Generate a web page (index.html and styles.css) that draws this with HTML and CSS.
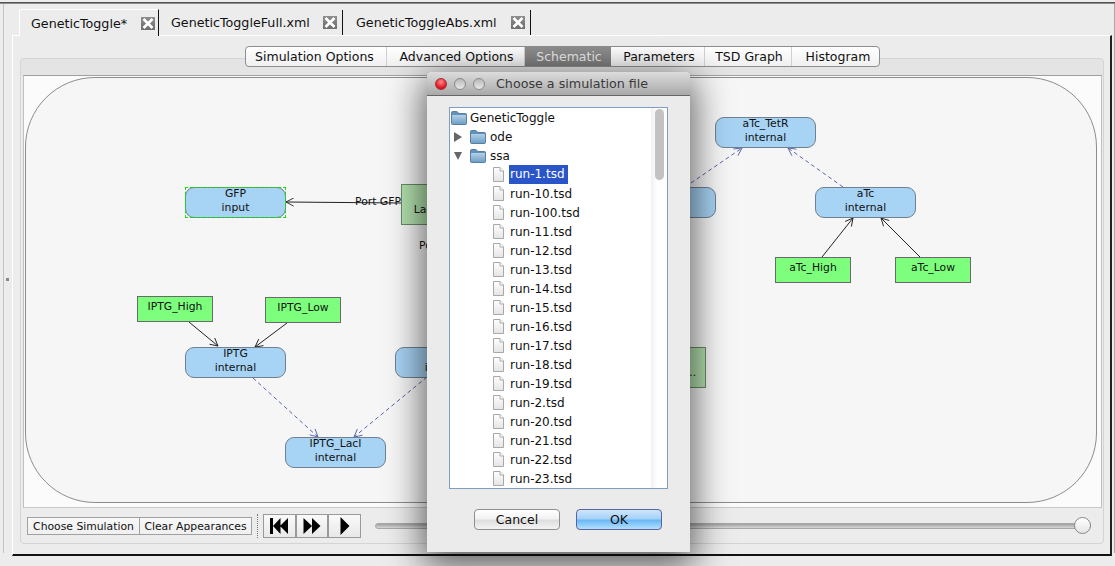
FILE: index.html
```html
<!DOCTYPE html>
<html lang="en">
<head>
    <meta charset="UTF-8">
    <meta name="viewport" content="width=device-width, initial-scale=1.0">
    <title>GeneticToggle</title>
    <link rel="stylesheet" href="styles.css">
</head>
<body>

<svg class="defs" width="0" height="0">
    <symbol id="folder" viewBox="0 0 16 14">
        <path d="M0.5 3 L0.5 1.6 Q0.5 0.5 1.6 0.5 L5.5 0.5 Q6.5 0.5 7 1.5 L7.5 2.5 L14.5 2.5 Q15.5 2.5 15.5 3.5 L15.5 12.5 Q15.5 13.5 14.5 13.5 L1.5 13.5 Q0.5 13.5 0.5 12.5 Z" fill="#5f93bd" stroke="#5a7f9e"/>
        <rect x="1" y="4" width="14" height="9" rx="0.5" fill="url(#folderFill)"/>
    </symbol>
    <symbol id="file" viewBox="0 0 11 15">
        <path d="M0.5 0.5 L7 0.5 L10.5 4 L10.5 14.5 L0.5 14.5 Z" fill="url(#fileFill)" stroke="#a8a8a8"/>
        <path d="M7 0.5 L7 4 L10.5 4" fill="#fff" stroke="#a8a8a8"/>
    </symbol>
    <linearGradient id="folderFill" x1="0" y1="0" x2="0" y2="1">
        <stop offset="0" stop-color="#b4d0e6"/>
        <stop offset="1" stop-color="#6ea0c8"/>
    </linearGradient>
    <linearGradient id="fileFill" x1="0" y1="0" x2="0" y2="1">
        <stop offset="0" stop-color="#ffffff"/>
        <stop offset="1" stop-color="#e4e4e4"/>
    </linearGradient>
    <marker id="arrowOpen" viewBox="0 0 10 10" refX="9.5" refY="5" markerWidth="9" markerHeight="9" markerUnits="userSpaceOnUse" orient="auto">
        <path d="M1 0.5 L9.5 5 L1 9.5" fill="none" stroke="#222" stroke-width="1"/>
    </marker>
    <marker id="arrowBlue" viewBox="0 0 10 10" refX="9.5" refY="5" markerWidth="9" markerHeight="9" markerUnits="userSpaceOnUse" orient="auto">
        <path d="M1 0.5 L9.5 5 L1 9.5" fill="none" stroke="#5a64ad" stroke-width="1"/>
    </marker>
</svg>

<div class="top-rule"></div>

<div class="split">
    <span class="split-handle"></span>

    <!-- File tabs -->
    <div class="tabs">
        <div class="tab tab-first">
            <span>GeneticToggle*</span>
            <span class="tab-close"><svg width="14" height="13" viewBox="0 0 14 13"><path d="M2.5 2 L11.5 11 M11.5 2 L2.5 11" stroke="#fff" stroke-width="2.6"/></svg></span>
        </div>
        <div class="tab tab-second">
            <span>GeneticToggleFull.xml</span>
            <span class="tab-close"><svg width="14" height="13" viewBox="0 0 14 13"><path d="M2.5 2 L11.5 11 M11.5 2 L2.5 11" stroke="#fff" stroke-width="2.6"/></svg></span>
        </div>
        <div class="tab tab-third">
            <span>GeneticToggleAbs.xml</span>
            <span class="tab-close"><svg width="14" height="13" viewBox="0 0 14 13"><path d="M2.5 2 L11.5 11 M11.5 2 L2.5 11" stroke="#fff" stroke-width="2.6"/></svg></span>
        </div>
    </div>

    <div class="tab-pane">
        <div class="segments">
            <button class="segment seg-sim">Simulation Options</button>
            <button class="segment seg-adv">Advanced Options</button>
            <button class="segment seg-sch active">Schematic</button>
            <button class="segment seg-par">Parameters</button>
            <button class="segment seg-tsd">TSD Graph</button>
            <button class="segment seg-his">Histogram</button>
        </div>

        <div class="panel">
            <!-- Schematic canvas, svg uses page coordinates -->
            <div class="canvas">
                <div class="compartment"></div>

                <svg class="edges" width="1079" height="433" viewBox="23 75 1079 433">
                    <g class="edge-solid">
                        <path d="M401 203 L286 202" marker-end="url(#arrowOpen)"/>
                        <path d="M189 322 L218 346" marker-end="url(#arrowOpen)"/>
                        <path d="M287 323 L255 347" marker-end="url(#arrowOpen)"/>
                        <path d="M822 257 L853 218" marker-end="url(#arrowOpen)"/>
                        <path d="M920 257 L881 218" marker-end="url(#arrowOpen)"/>
                    </g>
                    <g class="edge-dashed">
                        <path d="M253 378 L318 437" marker-end="url(#arrowBlue)"/>
                        <path d="M427 377 L354 437" marker-end="url(#arrowBlue)"/>
                        <path d="M691 183 L742 148" marker-end="url(#arrowBlue)"/>
                        <path d="M843 187 L788 148" marker-end="url(#arrowBlue)"/>
                    </g>
                </svg>

                <div class="node n-gfp">GFP<br>input</div>
                <div class="node n-iptg">IPTG<br>internal</div>
                <div class="node n-iptg-laci">IPTG_LacI<br>internal</div>
                <div class="node n-mid">IPTG<br>internal</div>
                <div class="node n-tetr">aTc_TetR<br>internal</div>
                <div class="node n-atc">aTc<br>internal</div>
                <div class="node n-hidden">TetR<br>internal</div>

                <div class="source n-iptg-high">IPTG_High</div>
                <div class="source n-iptg-low">IPTG_Low</div>
                <div class="source n-atc-high">aTc_High</div>
                <div class="source n-atc-low">aTc_Low</div>

                <div class="gate n-laci">LacI_TetR</div>
                <div class="gate n-gate2">...</div>

                <span class="port n-port-gfp">Port GFP</span>
                <span class="port n-port-2">Port</span>
            </div>

            <div class="toolbar">
                <div class="plain-buttons">
                    <button class="plain-button">Choose Simulation</button>
                    <button class="plain-button">Clear Appearances</button>
                </div>
                <span class="grip"></span>
                <div class="transport">
                    <button class="transport-button"><svg width="20" height="16" viewBox="0 0 20 16"><path d="M1 0 H4 V16 H1 Z M4 8 L11.5 0 V16 Z M11 8 L19 0 V16 Z"/></svg></button>
                    <button class="transport-button"><svg width="18" height="16" viewBox="0 0 18 16"><path d="M0.5 0 L9 8 L0.5 16 Z M9 0 L17.5 8 L9 16 Z"/></svg></button>
                    <button class="transport-button"><svg width="10" height="18" viewBox="0 0 10 18"><path d="M0.5 0 L9.5 9 L0.5 18 Z"/></svg></button>
                </div>
                <div class="slider"><span class="slider-knob"></span></div>
            </div>
        </div>
    </div>
</div>

<!-- File chooser dialog -->
<div class="dialog">
    <div class="title-bar">
        <span class="light light-close"></span>
        <span class="light"></span>
        <span class="light"></span>
        <span class="title-text">Choose a simulation file</span>
    </div>
    <div class="dialog-body">
        <div class="tree">
            <div class="row row-root"><svg class="folder-icon"><use href="#folder"/></svg>GeneticToggle</div>
            <div class="row row-dir"><span class="twisty twisty-right"></span><svg class="folder-icon"><use href="#folder"/></svg>ode</div>
            <div class="row row-dir"><span class="twisty twisty-down"></span><svg class="folder-icon"><use href="#folder"/></svg>ssa</div>
            <div class="row row-file"><svg class="file-icon"><use href="#file"/></svg><span class="selected">run-1.tsd</span></div>
            <div class="row row-file"><svg class="file-icon"><use href="#file"/></svg>run-10.tsd</div>
            <div class="row row-file"><svg class="file-icon"><use href="#file"/></svg>run-100.tsd</div>
            <div class="row row-file"><svg class="file-icon"><use href="#file"/></svg>run-11.tsd</div>
            <div class="row row-file"><svg class="file-icon"><use href="#file"/></svg>run-12.tsd</div>
            <div class="row row-file"><svg class="file-icon"><use href="#file"/></svg>run-13.tsd</div>
            <div class="row row-file"><svg class="file-icon"><use href="#file"/></svg>run-14.tsd</div>
            <div class="row row-file"><svg class="file-icon"><use href="#file"/></svg>run-15.tsd</div>
            <div class="row row-file"><svg class="file-icon"><use href="#file"/></svg>run-16.tsd</div>
            <div class="row row-file"><svg class="file-icon"><use href="#file"/></svg>run-17.tsd</div>
            <div class="row row-file"><svg class="file-icon"><use href="#file"/></svg>run-18.tsd</div>
            <div class="row row-file"><svg class="file-icon"><use href="#file"/></svg>run-19.tsd</div>
            <div class="row row-file"><svg class="file-icon"><use href="#file"/></svg>run-2.tsd</div>
            <div class="row row-file"><svg class="file-icon"><use href="#file"/></svg>run-20.tsd</div>
            <div class="row row-file"><svg class="file-icon"><use href="#file"/></svg>run-21.tsd</div>
            <div class="row row-file"><svg class="file-icon"><use href="#file"/></svg>run-22.tsd</div>
            <div class="row row-file"><svg class="file-icon"><use href="#file"/></svg>run-23.tsd</div>
            <div class="scroll-track"><span class="scroll-thumb"></span></div>
        </div>
        <div class="dialog-buttons">
            <button class="aqua-button">Cancel</button>
            <button class="aqua-button aqua-default">OK</button>
        </div>
    </div>
</div>

</body>
</html>
```

FILE: styles.css
```css
html, body {
    margin: 0;
    padding: 0;
    height: 566px;
    overflow: hidden;
}

body {
    position: relative;
    background-color: #ececec;
    color: #111;
    font-family: "DejaVu Sans", sans-serif;
    font-size: 12px;
}

button {
    font-family: inherit;
    color: inherit;
    margin: 0;
}

.defs {
    position: absolute;
}

.top-rule {
    margin-top: 2px;
    height: 1px;
    border-bottom: 1px solid #8c8c8c;
    background-color: #555;
}

/* Left splitter area */
.split {
    position: relative;
    box-sizing: border-box;
    height: 549px;
    margin-left: 3px;
    padding: 6px 2px 0 8px;
    border-left: 1px solid #c4c4c4;
    border-right: 1px solid #a8a8a8;
    display: flex;
    flex-direction: column;
}

.split-handle {
    position: absolute;
    left: 2px;
    top: 274px;
    width: 3px;
    height: 3px;
    background-color: #888;
}

/* Tabs */
.tabs {
    flex: none;
    display: flex;
    height: 25px;
    padding-left: 7px;
    position: relative;
    z-index: 1;
}

.tab {
    display: flex;
    align-items: center;
    justify-content: space-between;
    box-sizing: border-box;
    font-size: 12.7px;
    border-right: 1px solid #111;
    margin-right: 1px;
}

.tab-first {
    width: 140px;
    height: 27px;
    margin-top: -1px;
    padding: 0 3px 0 11px;
    background-color: #ececec;
    border-left: 1px solid #fff;
    border-top: 1px solid #fff;
    border-top-left-radius: 3px;
}

.tab-second {
    width: 183px;
    padding: 0 5px 0 11px;
}

.tab-third {
    width: 187px;
    padding: 0 5px 0 12px;
}

.tab-close {
    flex: none;
    width: 14px;
    height: 13px;
    background: linear-gradient(#8e8e8e, #6e6e6e);
    display: flex;
    align-items: center;
    justify-content: center;
}

.tab-close svg {
    flex: none;
}

.tab-pane {
    flex: none;
    box-sizing: border-box;
    height: 521px;
    padding: 10px 6px 0 7px;
    border-top: 1px solid #fff;
    border-left: 1px solid #fff;
    border-right: 2px solid #222;
    border-bottom: 2px solid #111;
}

/* Segmented control */
.segments {
    position: relative;
    z-index: 1;
    display: flex;
    width: 635px;
    height: 21px;
    box-sizing: border-box;
    margin: 0 0 -9px 225px;
    border: 1px solid #8e8e8e;
    border-radius: 4px;
    background: linear-gradient(#fff, #f0f0f0);
    overflow: hidden;
}

.segment {
    border: 0;
    border-right: 1px solid #d0d0d0;
    background: none;
    padding: 0;
    font-size: 12.5px;
    text-align: center;
}

.seg-sim { width: 141px; padding-right: 3px; }
.seg-adv { width: 138px; padding-left: 2px; }
.seg-sch { width: 86px; padding-left: 2px; }
.seg-par { width: 94px; padding-left: 3px; }
.seg-tsd { width: 87px; padding-left: 2px; }
.seg-his { flex: 1; border-right: 0; padding-left: 5px; }

.segment.active {
    background: linear-gradient(#8e8e8e, #7c7c7c);
    color: #e8e8e8;
    border-right: 0;
}

/* Panel with canvas and toolbar */
.panel {
    box-sizing: border-box;
    height: 486px;
    padding: 16px 1px 0 2px;
    background: linear-gradient(#e4e4e4 17px, #ececec 17px);
    border: 1px solid #d4d4d4;
    border-radius: 4px;
}

.canvas {
    position: relative;
    box-sizing: border-box;
    width: 1079px;
    height: 433px;
    background-color: #fbfbfb;
    border-top: 1px solid #a0a0a0;
    border-bottom: 1px solid #c8c8c8;
    border-right: 1px solid #c0c0c0;
    border-left: 1px solid #c0c0c0;
    overflow: hidden;
}

.compartment {
    position: absolute;
    left: 1px;
    top: 1px;
    width: 1072px;
    height: 426px;
    box-sizing: border-box;
    background-color: #f6f6f6;
    border: 1px solid #8c8c8c;
    border-radius: 70px;
}

.edges {
    position: absolute;
    left: -1px;
    top: -1px;
}

.edge-solid path {
    fill: none;
    stroke: #222;
    stroke-width: 1;
}

.edge-dashed path {
    fill: none;
    stroke: #5a64ad;
    stroke-width: 1;
    stroke-dasharray: 4 3;
}

/* Nodes are placed at their diagram coordinates */
.node, .source, .gate {
    position: absolute;
    box-sizing: border-box;
    font-size: 10.8px;
    line-height: 14px;
    text-align: center;
    color: #111;
}

.node {
    width: 101px;
    height: 31px;
    background-color: #a7d3f4;
    border: 1px solid #71808e;
    border-radius: 9px;
}

.node::before {
    content: "";
    display: block;
    margin-top: -1px;
}

.source {
    width: 76px;
    height: 26px;
    padding-top: 3px;
    background-color: #7dff7d;
    border: 1px solid #6a6a6a;
}

.gate {
    width: 76px;
    height: 41px;
    padding-top: 18px;
    background-color: #b4e2ae;
    border: 1px solid #6a8a6a;
}

.port {
    position: absolute;
    font-size: 10.8px;
    line-height: 14px;
}

.n-gfp::after {
    content: "";
    position: absolute;
    inset: -1px;
    border: 1px dashed #10e010;
}

.n-iptg { left: 161px; top: 271px; }
.n-gfp { left: 161px; top: 111px; }
.n-iptg-laci { left: 261px; top: 361px; }
.n-mid { left: 371px; top: 271px; }
.n-tetr { left: 691px; top: 41px; }
.n-atc { left: 791px; top: 111px; }
.n-hidden { left: 591px; top: 111px; }
.n-iptg-high { left: 113px; top: 220px; }
.n-iptg-low { left: 241px; top: 221px; }
.n-atc-high { left: 751px; top: 181px; }
.n-atc-low { left: 871px; top: 181px; }
.n-laci { left: 377px; top: 108px; }
.n-gate2 { left: 606px; top: 271px; padding-left: 46px; }
.n-port-gfp { left: 331px; top: 119px; }
.n-port-2 { left: 395px; top: 163px; }

/* Bottom toolbar */
.toolbar {
    display: flex;
    align-items: center;
    height: 36px;
    padding-left: 4px;
}

.plain-buttons {
    display: flex;
}

.plain-button {
    height: 18px;
    padding: 0;
    width: 112px;
    font-size: 10.8px;
    background: linear-gradient(#f8f8f8, #f0f0f0);
    border: 1px solid #a0a0a0;
    border-right-width: 0;
}

.plain-button:last-child {
    width: 113px;
    border-right-width: 1px;
}

.grip {
    height: 24px;
    margin: 0 5px;
    border-left: 1px dotted #777;
}

.transport {
    display: flex;
    border: 1px solid #999;
    height: 24px;
    box-sizing: border-box;
    width: 98px;
}

.transport-button {
    flex: 1;
    padding: 0;
    border: 0;
    border-right: 2px solid #999;
    background: linear-gradient(#fafafa, #e8e8e8);
    display: flex;
    align-items: center;
    justify-content: center;
}

.transport-button:last-child {
    border-right: 0;
}

.slider {
    position: relative;
    width: 716px;
    height: 6px;
    margin-left: 14px;
    box-sizing: border-box;
    background: linear-gradient(#a0a0a0, #d8d8d8);
    border: 1px solid #a8a8a8;
    border-radius: 3px;
}

.slider-knob {
    position: absolute;
    right: -1px;
    top: -7px;
    width: 17px;
    height: 17px;
    box-sizing: border-box;
    border-radius: 50%;
    border: 1px solid #888;
    background: linear-gradient(#fff, #e4e4e4);
}

/* Dialog sits on top of everything */
.dialog {
    position: absolute;
    left: 427px;
    top: 72px;
    width: 263px;
    height: 480px;
    background-color: #ebebeb;
    border-radius: 5px 5px 0 0;
    box-shadow: 0 10px 36px 4px rgba(0, 0, 0, 0.62);
    z-index: 10;
}

.title-bar {
    display: flex;
    align-items: center;
    height: 23px;
    padding-left: 8px;
    gap: 7px;
    background: linear-gradient(#dcdcdc, #a9a9a9);
    border-bottom: 1px solid #666;
    border-radius: 5px 5px 0 0;
}

.light {
    width: 12px;
    height: 12px;
    box-sizing: border-box;
    border-radius: 50%;
    border: 1px solid #8a8a8a;
    background: linear-gradient(#b8b8b8, #e8e8e8);
}

.light-close {
    background: radial-gradient(circle at 50% 30%, #ff8a8a, #e01020 70%);
    border-color: #a03030;
}

.title-text {
    margin-left: 4px;
    font-size: 12.7px;
    color: #3a3a3a;
}

.dialog-body {
    padding: 11px 22px 0 22px;
}

.tree {
    position: relative;
    box-sizing: border-box;
    width: 219px;
    height: 382px;
    background-color: #fff;
    border: 1px solid #7f9dc0;
    overflow: hidden;
}

.row {
    display: flex;
    align-items: center;
    height: 19px;
    font-size: 12px;
    white-space: nowrap;
}

.row-root { padding-left: 1px; }
.row-dir { padding-left: 4px; }
.row-file { padding-left: 43px; }

.folder-icon {
    width: 16px;
    height: 14px;
    margin-right: 3px;
}

.row-dir .folder-icon {
    margin-right: 4px;
}

.file-icon {
    width: 11px;
    height: 15px;
    margin-right: 6px;
}

.twisty {
    width: 0;
    height: 0;
    margin-right: 8px;
}

.twisty-right {
    border-left: 8px solid #666;
    border-top: 5px solid transparent;
    border-bottom: 5px solid transparent;
}

.twisty-down {
    border-top: 8px solid #666;
    border-left: 4px solid transparent;
    border-right: 4px solid transparent;
}

.selected {
    display: block;
    margin-left: -1px;
    padding: 0 3px 0 1px;
    line-height: 19px;
    background-color: #2a55c8;
    color: #fff;
}

.scroll-track {
    position: absolute;
    right: 0;
    top: 0;
    bottom: 0;
    width: 16px;
    background: linear-gradient(90deg, #f0f0f0, #fff 40%);
}

.scroll-thumb {
    position: absolute;
    left: 4px;
    top: 1px;
    width: 9px;
    height: 71px;
    border-radius: 5px;
    background-color: #c2c2c2;
}

.dialog-buttons {
    display: flex;
    justify-content: flex-end;
    gap: 16px;
    margin-top: 20px;
    padding-right: 6px;
}

.aqua-button {
    width: 86px;
    height: 21px;
    padding: 0;
    font-size: 12.5px;
    border: 1px solid #8f8f8f;
    border-radius: 4px;
    background: linear-gradient(#fff, #f2f2f2 45%, #dedede 55%, #f4f4f4);
}

.aqua-default {
    border-color: #5a64a0;
    background: linear-gradient(#cfe6fb, #a6d2f8 45%, #6bb8f6 55%, #b4e0fc);
}
```
